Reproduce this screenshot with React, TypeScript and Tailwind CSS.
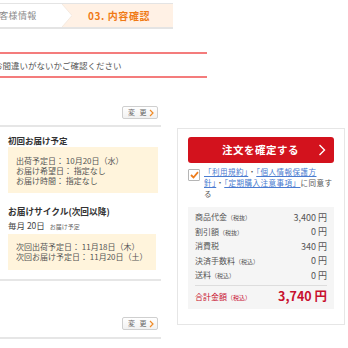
function ChangeButton() {
  return (
    <div className="flex h-[13px] w-[36px] items-center rounded-[2px] border border-[#cfcfcf] bg-gradient-to-b from-white to-[#f1f1f1] pl-[5px]">
      <span className="text-[7px] leading-none tracking-[1.5px] text-[#666]">変 更</span>
      <svg width="5" height="8" viewBox="0 0 5 8" className="ml-auto mr-[3px]">
        <path d="M1 1 L4 4 L1 7" fill="none" stroke="#f08a24" strokeWidth="1.2" />
      </svg>
    </div>
  )
}

function Row({ label, note, value }: { label: string; note?: string; value: string }) {
  return (
    <div className="flex h-[14.5px] items-center justify-between">
      <span className="text-[8px]">
        {label}
        {note && <span className="text-[6px]">{note}</span>}
      </span>
      <span className="text-[9px]">{value}</span>
    </div>
  )
}

export default function App() {
  return (
    <div className="relative h-[348px] w-[348px] overflow-hidden bg-white font-['Noto_Sans_CJK_JP',sans-serif] text-[#555]">
      {/* stepper */}
      <div className="mt-[3px] flex h-[26px] w-[173px] border-t border-b-2 border-[#e4e4e4]">
        <div className="flex w-[62px] shrink-0 items-center overflow-hidden">
          <span className="ml-[-10px] whitespace-nowrap text-[9px] tracking-[0.3px] text-[#8a8a8a]">お客様情報</span>
        </div>
        <div className="flex flex-1 items-center bg-[#fff1e5]">
          <svg width="10" height="23" viewBox="0 0 10 23" className="shrink-0">
            <path d="M0 0 L10 11.5 L0 23 Z" fill="#fff" />
            <path d="M0 0 L10 11.5 L0 23" fill="none" stroke="#f1e6dc" strokeWidth="0.8" />
          </svg>
          <span className="ml-[16px] whitespace-nowrap text-[10px] font-bold tracking-[0.6px] text-[#f07a15]">03. 内容確認</span>
        </div>
      </div>

      {/* notice */}
      <div className="mt-[23px] flex h-[26px] w-[207px] items-center overflow-hidden border-y-2 border-[#f47c7c]">
        <span className="ml-[-6px] whitespace-nowrap text-[8.5px] text-[#555]">お間違いがないかご確認ください</span>
      </div>

      <div className="flex items-start">
        {/* left column */}
        <div className="w-[161px] shrink-0">
          <div className="mt-[28px] flex justify-end pr-[3px]">
            <ChangeButton />
          </div>
          <div className="mt-[6px] h-[2px] bg-[#e6e6e6]" />

          <div className="mt-[7px] pl-[8px] text-[8.5px] font-bold leading-[12px] text-[#333]">初回お届け予定</div>
          <div className="ml-[8px] mt-[1px] w-[150px] bg-[#fff4dc] pb-[7px] pl-[8px] pt-[9px] text-[8px] leading-[10px] text-[#555]">
            <div>出荷予定日： 10月20日（水）</div>
            <div>お届け希望日： 指定なし</div>
            <div>お届け時間： 指定なし</div>
          </div>

          <div className="mt-[13px] pl-[8px] text-[8.7px] font-bold leading-[12px] text-[#333]">お届けサイクル(次回以降)</div>
          <div className="mt-[1px] pl-[8px] text-[8.5px] leading-[12px] text-[#444]">
            毎月 20日 <span className="ml-[3px] text-[6px] text-[#666]">お届け予定</span>
          </div>
          <div className="ml-[8px] mt-[1px] w-[148px] bg-[#fff4dc] pb-[8px] pl-[8px] pt-[8px] text-[8px] leading-[10px] text-[#555]">
            <div>次回出荷予定日： 11月18日（木）</div>
            <div>次回お届け予定日： 11月20日（土）</div>
          </div>
          <div className="mt-[9px] h-[2px] bg-[#e6e6e6]" />

          <div className="mt-[36px] flex justify-end pr-[3px]">
            <ChangeButton />
          </div>
          <div className="mt-[7px] h-[2px] bg-[#e6e6e6]" />
        </div>

        {/* right panel */}
        <div className="ml-[16px] mt-[50px] w-[168px] shrink-0 border border-[#e6e6e6] px-[10px] pb-[15px] pt-[8px]">
          <div className="flex h-[26px] items-center rounded-[3px] bg-[#d3121d]">
            <span className="ml-[34px] text-[10.5px] font-bold tracking-[0.5px] text-white">注文を確定する</span>
            <svg width="8" height="12" viewBox="0 0 8 12" className="ml-auto mr-[8px]">
              <path d="M1.5 1 L6.5 6 L1.5 11" fill="none" stroke="#fff" strokeWidth="1.4" />
            </svg>
          </div>

          <div className="mt-[3px] flex items-start">
            <div className="mt-[3px] flex h-[12px] w-[12px] shrink-0 items-center justify-center rounded-[1px] border border-[#b5b5b5] bg-white">
              <svg width="9" height="8" viewBox="0 0 9 8">
                <path d="M1 4 L3.5 6.5 L8 1.2" fill="none" stroke="#ee7d1c" strokeWidth="1.8" />
              </svg>
            </div>
            <div className="ml-[4px] w-[130px] whitespace-nowrap text-[7.5px] leading-[11px] tracking-[0.5px] text-[#555]">
              <span className="text-[#4a7bd0] underline">「利用規約」</span>・<span className="text-[#4a7bd0] underline">「個人情報保護方</span>
              <br />
              <span className="text-[#4a7bd0] underline">針」</span>・<span className="text-[#4a7bd0] underline">「定期購入注意事項」</span>に同意す
              <br />る
            </div>
          </div>

          <div className="mt-[8px] bg-[#f5f5f5] px-[7px] pb-[4px] pt-[3px]">
            <Row label="商品代金" note="（税抜）" value="3,400 円" />
            <Row label="割引額" note="（税抜）" value="0 円" />
            <Row label="消費税" value="340 円" />
            <Row label="決済手数料" note="（税込）" value="0 円" />
            <Row label="送料" note="（税込）" value="0 円" />
            <div className="mt-[2px] h-px bg-[#dddddd]" />
            <div className="mt-[3px] flex h-[16px] items-center justify-between text-[#c8102e]">
              <span className="text-[8px]">
                合計金額<span className="text-[6px]">（税込）</span>
              </span>
              <span className="text-[12.5px] font-bold">3,740 円</span>
            </div>
          </div>
        </div>
      </div>
    </div>
  )
}
